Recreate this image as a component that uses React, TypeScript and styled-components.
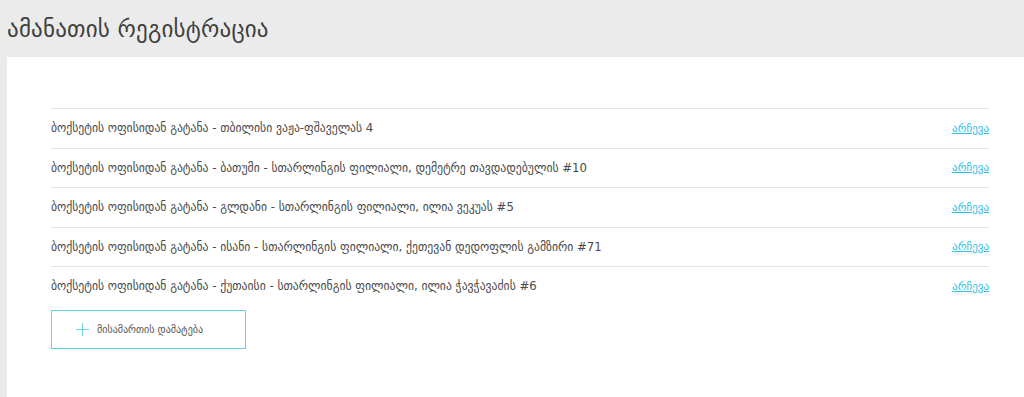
import React from "react";
import styled, { createGlobalStyle } from "styled-components";

const GlobalStyle = createGlobalStyle`
  html, body {
    margin: 0;
    padding: 0;
    background: #ebebeb;
    font-family: "DejaVu Sans", "Noto Sans", sans-serif;
    color: #444;
  }
`;

const Page = styled.div`
  width: 1024px;
  height: 397px;
  overflow: hidden;
  display: flex;
  flex-direction: column;
`;

const Header = styled.div`
  height: 57px;
  display: flex;
  align-items: center;
  padding-left: 7px;
  box-sizing: border-box;
`;

const Title = styled.h1`
  margin: 0;
  font-size: 23px;
  font-weight: normal;
  color: #3f3f3f;
  letter-spacing: 0.2px;
`;

const Panel = styled.div`
  flex: 1;
  margin-left: 7px;
  background: #fff;
  padding: 51px 35px 0 44px;
`;

const List = styled.ul`
  list-style: none;
  margin: 0;
  padding: 0;
`;

const Row = styled.li`
  height: 38.5px;
  display: flex;
  align-items: center;
  justify-content: space-between;
  border-top: 1px solid #e3e3e3;
  font-size: 11.7px;
  color: #4a4a4a;
`;

const PickLink = styled.a`
  color: #2cc0e6;
  text-decoration: underline;
  font-size: 11px;
  cursor: pointer;
`;

const AddButton = styled.button`
  margin-top: 4px;
  width: 195px;
  height: 39px;
  display: flex;
  align-items: center;
  gap: 8px;
  padding: 0 0 0 24px;
  background: #fff;
  border: 1px solid #5fd4ea;
  font-family: inherit;
  font-size: 10px;
  color: #555;
  cursor: pointer;
`;

const PlusIcon = () => (
  <svg width="13" height="13" viewBox="0 0 13 13">
    <path d="M6.5 0v13M0 6.5h13" stroke="#6fd8ec" strokeWidth="1" />
  </svg>
);

const addresses = [
  "ბოქსეტის ოფისიდან გატანა - თბილისი ვაჟა-ფშაველას 4",
  "ბოქსეტის ოფისიდან გატანა - ბათუმი - სთარლინგის ფილიალი, დემეტრე თავდადებულის #10",
  "ბოქსეტის ოფისიდან გატანა - გლდანი - სთარლინგის ფილიალი, ილია ვეკუას #5",
  "ბოქსეტის ოფისიდან გატანა - ისანი - სთარლინგის ფილიალი, ქეთევან დედოფლის გამზირი #71",
  "ბოქსეტის ოფისიდან გატანა - ქუთაისი - სთარლინგის ფილიალი, ილია ჭავჭავაძის #6",
];

const App = () => {
  return (
    <Page>
      <GlobalStyle />
      <Header>
        <Title>ამანათის რეგისტრაცია</Title>
      </Header>
      <Panel>
        <List>
          {addresses.map((a) => (
            <Row key={a}>
              <span>{a}</span>
              <PickLink>არჩევა</PickLink>
            </Row>
          ))}
        </List>
        <AddButton>
          <PlusIcon />
          მისამართის დამატება
        </AddButton>
      </Panel>
    </Page>
  );
};

export default App;
